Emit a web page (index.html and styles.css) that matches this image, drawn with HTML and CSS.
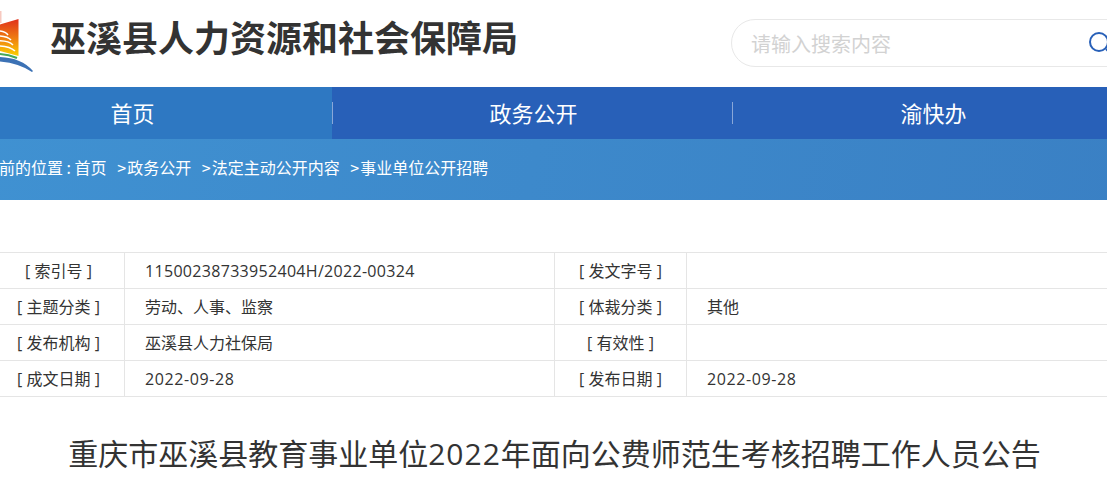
FILE: index.html
```html
<!DOCTYPE html>
<html lang="zh-CN">
<head>
<meta charset="utf-8">
<title>重庆市巫溪县教育事业单位2022年面向公费师范生考核招聘工作人员公告</title>
<link rel="stylesheet" href="styles.css">
</head>
<body>
<div class="page">
  <header class="header">
    <svg class="logo" width="53" height="80" viewBox="-20 0 53 80" aria-hidden="true">
      <defs>
        <linearGradient id="leaf" x1="0" y1="0" x2="0" y2="1">
          <stop offset="0" stop-color="#e0301a"/>
          <stop offset=".5" stop-color="#ee7a12"/>
          <stop offset="1" stop-color="#fbd000"/>
        </linearGradient>
      </defs>
      <path d="M-6 11H1.500V23H-6Z" fill="#f7c9c0"/>
      <path d="M1.500 24L18.500 19V56L0 51H-6V26Z" fill="url(#leaf)"/>
      <g fill="none" stroke="#fff" stroke-width="1.500">
        <path d="M-6 31Q5 30 8 35"/>
        <path d="M-6 36Q7 35 11 40"/>
        <path d="M-6 41Q8 40 13 45"/>
        <path d="M-6 46Q9 45 15 51"/>
      </g>
      <path d="M-6 54Q6 53 17 58" fill="none" stroke="#45a85a" stroke-width="2"/>
      <path d="M-6 57Q20 56 33 71L32 72Q18 62 -6 61Z" fill="#3c72b5"/>
    </svg>
    <h1 class="site-name">巫溪县人力资源和社会保障局</h1>
    <form class="search">
      <span class="search-hint">请输入搜索内容</span>
      <svg class="search-icon" width="26" height="26" viewBox="0 0 26 26" aria-hidden="true">
        <circle cx="11" cy="11" r="9" fill="none" stroke="#2860b8" stroke-width="2"/>
        <path d="M18 18L24 24" stroke="#2860b8" stroke-width="2"/>
      </svg>
    </form>
  </header>

  <nav class="nav">
    <a class="nav-item nav-active">首页</a>
    <a class="nav-item">政务公开</a>
    <a class="nav-item">渝快办</a>
  </nav>

  <div class="crumbs">
    <span>您当前的位置 : 首页</span>
    <span class="crumb"><span class="crumb-sep">&gt;</span>政务公开</span>
    <span class="crumb"><span class="crumb-sep">&gt;</span>法定主动公开内容</span>
    <span class="crumb"><span class="crumb-sep">&gt;</span>事业单位公开招聘</span>
  </div>

  <main class="article">
    <table class="meta">
      <colgroup>
        <col class="c-label"><col class="c-wide"><col class="c-label"><col>
      </colgroup>
      <tr><th>[ 索引号 ]</th><td class="code">11500238733952404H/2022-00324</td><th>[ 发文字号 ]</th><td></td></tr>
      <tr><th>[ 主题分类 ]</th><td>劳动、人事、监察</td><th>[ 体裁分类 ]</th><td>其他</td></tr>
      <tr><th>[ 发布机构 ]</th><td>巫溪县人力社保局</td><th>[ 有效性 ]</th><td></td></tr>
      <tr><th>[ 成文日期 ]</th><td class="date">2022-09-28</td><th>[ 发布日期 ]</th><td class="date">2022-09-28</td></tr>
    </table>
    <h2 class="title">重庆市巫溪县教育事业单位<span class="title-num">2022</span>年面向公费师范生考核招聘工作人员公告</h2>
  </main>
</div>
</body>
</html>
```
FILE: styles.css
```css
html, body {
  margin: 0;
  padding: 0;
  overflow: hidden;
  background: #fff;
}

.page {
  width: 1200px;
  margin-left: -68px;
  font-family: "Open Sans", "Noto Sans CJK SC", sans-serif;
  color: #333;
}

.header {
  display: flex;
  align-items: flex-start;
  height: 87px;
  padding-left: 48px;
  box-sizing: border-box;
}

.logo {
  flex: none;
}

.site-name {
  margin: 10px 0 0 17px;
  font-family: "Noto Sans CJK SC", sans-serif;
  font-size: 36px;
  line-height: 52px;
  font-weight: 700;
  color: #333;
  white-space: nowrap;
}

.search {
  display: flex;
  align-items: center;
  justify-content: space-between;
  margin: 19px 0 0 auto;
  width: 400px;
  height: 48px;
  flex: none;
  box-sizing: border-box;
  border: 1px solid #e8e8e8;
  border-radius: 24px;
  padding: 0 16px 0 19px;
  position: relative;
  left: -1px;
}

.search-hint {
  font-family: "Noto Sans CJK SC", sans-serif;
  font-size: 20px;
  color: #d2d2d2;
}

.search-icon {
  margin: 2px 0 0;
  flex: none;
}

.nav {
  display: flex;
  height: 52px;
  background: #2860b8;
}

.nav-item {
  position: relative;
  width: 400px;
  box-sizing: border-box;
  padding-left: 3px;
  font-family: "Noto Sans CJK SC", sans-serif;
  font-size: 22px;
  line-height: 50px;
  text-align: center;
  color: #fff;
}

.nav-active {
  padding-left: 1px;
  background: #2e78c2;
}

.nav-item + .nav-item::before {
  content: "";
  position: absolute;
  left: 0;
  top: 15px;
  height: 22px;
  width: 1px;
  background: rgba(255, 255, 255, .45);
}

.crumbs {
  display: flex;
  height: 61px;
  box-sizing: border-box;
  padding: 0 0 5px 35px;
  align-items: center;
  font-family: "Noto Sans CJK SC", sans-serif;
  font-size: 16px;
  color: #fff;
  background: linear-gradient(100deg, #4092d2, #3a80c4);
}

.crumb {
  margin-left: 10.5px;
}

.crumb-sep {
  display: inline-block;
  width: 10px;
}

.article {
  width: 1125px;
  margin-left: 60px;
}

.meta {
  width: 100%;
  margin-top: 52px;
  border-collapse: collapse;
  table-layout: fixed;
  font-size: 16px;
  color: #333;
}

.c-label {
  width: 132px;
}

.c-wide {
  width: 430px;
}

.meta th,
.meta td {
  height: 36px;
  padding: 0;
  border: 1px solid #e5e5e5;
  box-sizing: border-box;
  font-weight: 400;
  line-height: 24px;
}

.meta th {
  text-align: center;
}

.meta td {
  padding-left: 20px;
}

.meta .code {
  letter-spacing: .31px;
}

.meta .date {
  letter-spacing: .6px;
}

.title {
  margin: 38px 0 0;
  font-size: 30px;
  line-height: 38px;
  font-weight: 400;
  text-align: center;
  color: #333;
  white-space: nowrap;
}

.title-num {
  letter-spacing: 1px;
}
```
